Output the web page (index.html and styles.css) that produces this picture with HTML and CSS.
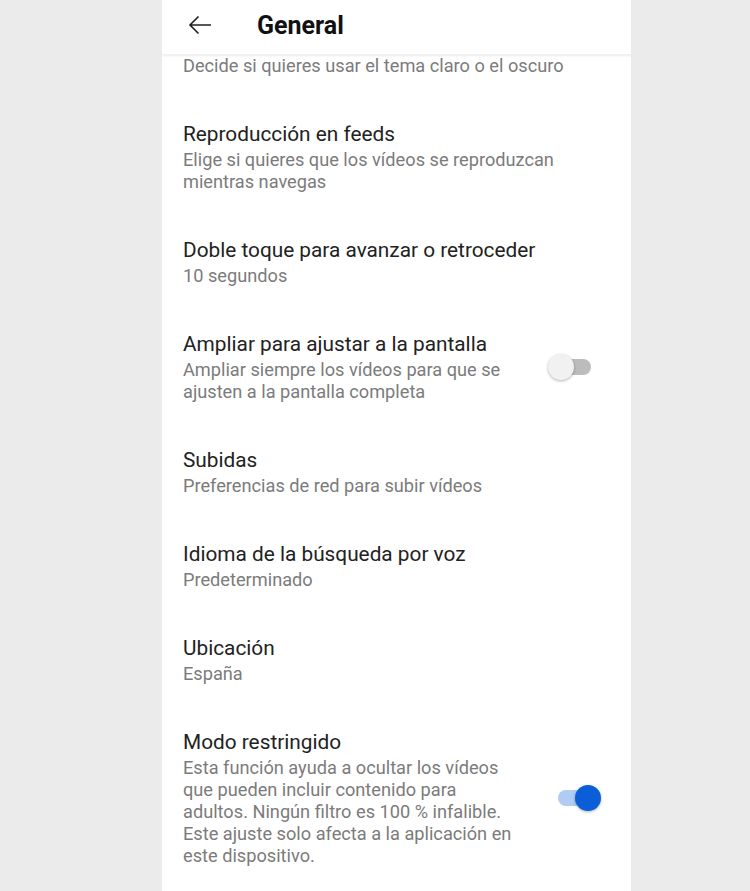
FILE: index.html
```html
<html>
    <head>
        <meta charset="utf-8">
        <title>General</title>
        <link rel="stylesheet" href="styles.css">
    </head>
    <body>
        <div class="screen">
            <div class="topbar">
                <svg class="back" width="26" height="22" viewBox="0 0 26 22">
                    <path d="M24 11H3M11.5 2.5L3 11l8.5 8.5" fill="none" stroke="#202020" stroke-width="1.6"/>
                </svg>
                <h1>General</h1>
            </div>
            <div class="list">
                <div class="item cut">
                    <div class="text">
                        <p class="sub">Decide si quieres usar el tema claro o el oscuro</p>
                    </div>
                </div>
                <div class="item">
                    <div class="text">
                        <p class="title">Reproducción en feeds</p>
                        <p class="sub">Elige si quieres que los vídeos se reproduzcan mientras navegas</p>
                    </div>
                </div>
                <div class="item">
                    <div class="text">
                        <p class="title">Doble toque para avanzar o retroceder</p>
                        <p class="sub">10 segundos</p>
                    </div>
                </div>
                <div class="item">
                    <div class="text">
                        <p class="title">Ampliar para ajustar a la pantalla</p>
                        <p class="sub">Ampliar siempre los vídeos para que se ajusten a la pantalla completa</p>
                    </div>
                    <div class="switch"><span class="track"></span><span class="thumb"></span></div>
                </div>
                <div class="item">
                    <div class="text">
                        <p class="title">Subidas</p>
                        <p class="sub">Preferencias de red para subir vídeos</p>
                    </div>
                </div>
                <div class="item">
                    <div class="text">
                        <p class="title">Idioma de la búsqueda por voz</p>
                        <p class="sub">Predeterminado</p>
                    </div>
                </div>
                <div class="item">
                    <div class="text">
                        <p class="title">Ubicación</p>
                        <p class="sub">España</p>
                    </div>
                </div>
                <div class="item">
                    <div class="text">
                        <p class="title">Modo restringido</p>
                        <p class="sub">Esta función ayuda a ocultar los vídeos que pueden incluir contenido para adultos. Ningún filtro es 100 % infalible. Este ajuste solo afecta a la aplicación en este dispositivo.</p>
                    </div>
                    <div class="switch on"><span class="track"></span><span class="thumb"></span></div>
                </div>
            </div>
        </div>
    </body>
</html>
```

FILE: styles.css
```css
body {
    margin: 0;
    background-color: #ebebeb;
    font-family: Roboto, "Noto Sans", sans-serif;
    color: #1c1c1c;
}
.screen {
    width: 469px;
    margin-left: 162px;
    height: 891px;
    background-color: #fff;
    overflow: hidden;
}
.topbar {
    height: 54px;
    display: flex;
    align-items: center;
    box-shadow: 0 1px 2px rgba(0,0,0,.08);
    border-bottom: 1px solid #f0f0f0;
    position: relative;
}
.back {
    margin-left: 25px;
    margin-top: -4px;
}
h1 {
    margin: -4px 0 0 44px;
    font-size: 25px;
    font-weight: 700;
    color: #111;
}
.item {
    display: flex;
    align-items: center;
    padding: 22px 30px 22px 21px;
}
.item.cut {
    padding-top: 0;
}
.text {
    flex: 1;
}
.text p {
    margin: 0;
}
.title {
    font-size: 20.8px;
    line-height: 26px;
    margin-bottom: 2px !important;
    color: #222;
}
.sub {
    font-size: 18.2px;
    line-height: 22px;
    color: #7b7b7b;
}
.switch {
    position: relative;
    width: 53px;
    height: 28px;
    margin-left: 30px;
    flex: none;
}
.track {
    position: absolute;
    left: 10px;
    top: 6px;
    width: 33px;
    height: 16px;
    border-radius: 8px;
    background-color: #bcbcbc;
}
.thumb {
    position: absolute;
    left: 0;
    top: 1px;
    width: 26px;
    height: 26px;
    border-radius: 50%;
    background-color: #f1f1f1;
    box-shadow: 0 1px 3px rgba(0,0,0,.3);
}
.switch.on .track {
    background-color: #b2cbf2;
}
.switch.on .thumb {
    left: 27px;
    background-color: #0b5ed7;
}
```
